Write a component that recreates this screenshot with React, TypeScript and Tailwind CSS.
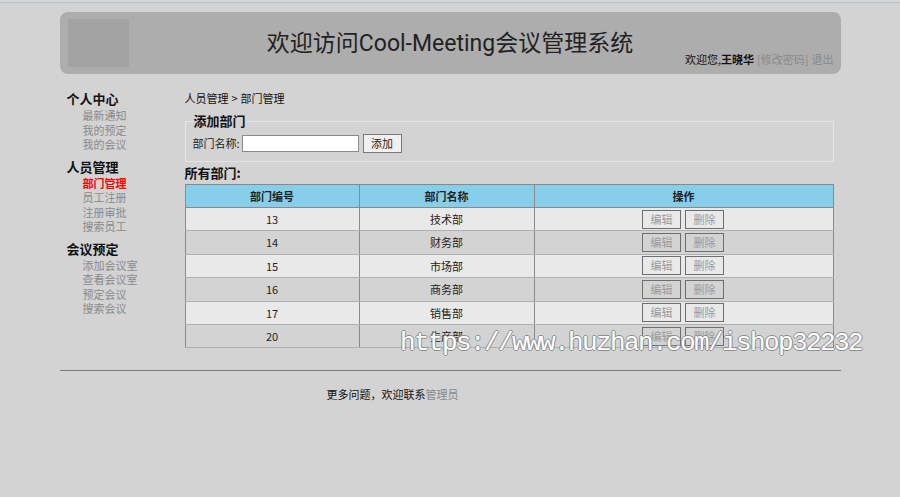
import React from "react";

const rows = [
  ["13", "技术部"],
  ["14", "财务部"],
  ["15", "市场部"],
  ["16", "商务部"],
  ["17", "销售部"],
  ["20", "生产部"],
];

const groups = [
  { title: "个人中心", items: ["最新通知", "我的预定", "我的会议"] },
  { title: "人员管理", items: ["部门管理", "员工注册", "注册审批", "搜索员工"] },
  { title: "会议预定", items: ["添加会议室", "查看会议室", "预定会议", "搜索会议"] },
];

export default function App() {
  return (
    <div
      className="relative w-[900px] h-[497px] overflow-hidden bg-[#d3d3d3] text-[#222]"
      style={{ fontFamily: '"Noto Sans CJK SC", "Noto Sans", sans-serif' }}
    >
      <div className="h-[3px] border-b border-[#b8c2cc] bg-[#d7d7d7]" />
      <div className="mx-auto w-[781px] pt-[9px]">
        {/* Header */}
        <div className="grid grid-cols-[1fr_auto_1fr] h-[62px] rounded-[8px] bg-[#adadad]">
          <div className="pl-[8px] pt-[7px]">
            <div className="w-[61px] h-[48px] bg-[#a3a3a3]" />
          </div>
          <div
            className="flex items-center pt-[1px] text-[23px] leading-[30px] text-[#222]"
            style={{ fontFamily: 'Roboto, "Noto Sans CJK SC", sans-serif' }}
          >
            欢迎访问Cool-Meeting会议管理系统
          </div>
          <div className="flex items-end justify-end pr-[7px] pb-[8px] text-[11px] leading-[13px]">
            <span className="text-[#111]">欢迎您,</span>
            <span className="font-bold text-[#111]">王晓华</span>
            <span className="ml-[3px] text-[#8a8a8a]">[修改密码]</span>
            <span className="ml-[3px] text-[#8a8a8a]">退出</span>
          </div>
        </div>

        {/* Body */}
        <div className="flex mt-[16px]">
          <div className="w-[125px] pl-[7px] flex flex-col gap-[6px]">
            {groups.map((g) => (
              <div key={g.title} className="flex flex-col">
                <div className="text-[13px] leading-[18px] font-bold text-[#111]">{g.title}</div>
                {g.items.map((it) => (
                  <div
                    key={it}
                    className={
                      "pl-[16px] text-[11px] leading-[14.5px] " +
                      (it === "部门管理" ? "text-[#ff0000] font-bold" : "text-[#8a8a8a]")
                    }
                  >
                    {it}
                  </div>
                ))}
              </div>
            ))}
          </div>

          <div className="w-[649px] flex flex-col">
            <div className="flex text-[11px] leading-[14px] text-[#111] pt-[1px]">
              <span>人员管理</span>
              <span className="mx-[3px]">&gt;</span>
              <span>部门管理</span>
            </div>
            <fieldset className="mt-[8px] border border-[#e4e4e4] px-[7px] pb-[7px] pt-0 h-[49px]">
              <legend className="px-[1px] text-[13px] leading-[16px] font-bold text-[#111] -mt-[1px]">添加部门</legend>
              <div className="flex items-center mt-[5px] text-[11px] text-[#222]">
                <span>部门名称:</span>
                <input
                  className="ml-[2px] w-[117px] h-[17px] bg-white border border-[#8a8a8a] outline-none"
                  type="text"
                />
                <button className="ml-[4px] w-[39px] h-[19px] bg-[#f0f0f0] border border-[#7a7a7a] text-[11px] leading-[17px] text-[#222]">
                  添加
                </button>
              </div>
            </fieldset>
            <div className="mt-[2px] text-[13px] leading-[18px] font-bold text-[#111]">所有部门:</div>
            <table className="mt-[2px] w-[649px] border-collapse border border-[#8a8a8a] text-[11px] text-[#222]">
              <thead>
                <tr className="h-[23px] bg-[#87ceeb]">
                  <th className="w-[174px] border border-[#8a8a8a] font-bold">部门编号</th>
                  <th className="w-[175px] border border-[#8a8a8a] font-bold">部门名称</th>
                  <th className="border border-[#8a8a8a] font-bold">操作</th>
                </tr>
              </thead>
              <tbody>
                {rows.map(([id, name], i) => (
                  <tr key={id} className={"h-[23.4px] " + (i % 2 === 0 ? "bg-[#e9e9e9]" : "bg-[#d3d3d3]")}>
                    <td className="border-y border-[#b0b0b0] border-r border-r-[#8a8a8a] text-center">{id}</td>
                    <td className="border-y border-[#b0b0b0] border-r border-r-[#8a8a8a] text-center">{name}</td>
                    <td className="border-y border-[#b0b0b0] text-center">
                      <div className="flex justify-center gap-[4px] -ml-[1px]">
                        <button className="w-[39px] h-[19px] border border-[#6e6e6e] bg-transparent text-[11px] leading-[17px] text-[#9a9a9a]">
                          编辑
                        </button>
                        <button className="w-[39px] h-[19px] border border-[#6e6e6e] bg-transparent text-[11px] leading-[17px] text-[#9a9a9a]">
                          删除
                        </button>
                      </div>
                    </td>
                  </tr>
                ))}
              </tbody>
            </table>
          </div>
        </div>

        {/* Footer */}
        <div className="mt-[22px] border-t border-[#7a7a7a]" />
        <div className="mt-[16px] pl-[267px] text-[11px] leading-[14px] text-[#111]">
          更多问题，欢迎联系<span className="text-[#8a8a8a]">管理员</span>
        </div>
      </div>

      {/* Watermark */}
      <div
        className="absolute left-[400px] top-[327px] text-[26px] leading-[32px] tracking-[-1.6px] text-white whitespace-nowrap [text-shadow:1px_0_#8c8c8c,-1px_0_#8c8c8c,0_1px_#8c8c8c,0_-1px_#8c8c8c]"
        style={{ fontFamily: '"Liberation Mono", monospace' }}
      >
        https://www.huzhan.com/ishop32232
      </div>
    </div>
  );
}
